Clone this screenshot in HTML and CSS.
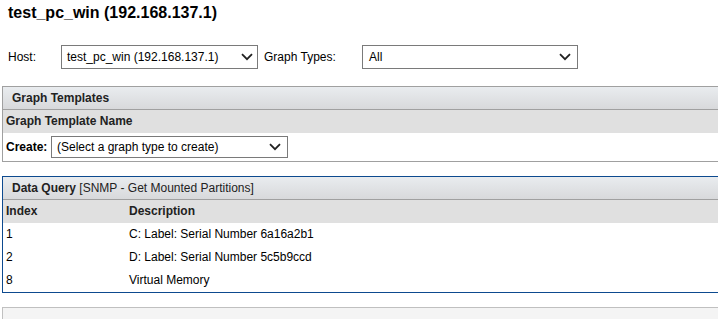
FILE: index.html
```html
<!DOCTYPE html>
<html lang="en">
<head>
    <meta charset="UTF-8">
    <title>New Graphs</title>
    <link rel="stylesheet" href="styles.css">
</head>
<body>
    <h1 class="title">test_pc_win (192.168.137.1)</h1>

    <div class="filter-row">
        <span class="label host-label">Host:</span>
        <div class="select host-select">
            <span>test_pc_win (192.168.137.1)</span>
            <svg class="chev" width="12" height="8" viewBox="0 0 12 8"><path d="M1 1.2 L6 6.2 L11 1.2" fill="none" stroke="#222" stroke-width="1.8"/></svg>
        </div>
        <span class="label types-label">Graph Types:</span>
        <div class="select types-select">
            <span>All</span>
            <svg class="chev" width="12" height="8" viewBox="0 0 12 8"><path d="M1 1.2 L6 6.2 L11 1.2" fill="none" stroke="#222" stroke-width="1.8"/></svg>
        </div>
    </div>

    <div class="panel">
        <div class="panel-head">Graph Templates</div>
        <div class="col-head">Graph Template Name</div>
        <div class="create-row">
            <span class="create-label">Create:</span>
            <div class="select create-select">
                <span>(Select a graph type to create)</span>
                <svg class="chev" width="12" height="8" viewBox="0 0 12 8"><path d="M1 1.2 L6 6.2 L11 1.2" fill="none" stroke="#222" stroke-width="1.8"/></svg>
            </div>
        </div>
    </div>

    <div class="panel panel-blue">
        <div class="panel-head"><b>Data Query</b> [SNMP - Get Mounted Partitions]</div>
        <div class="col-head grid-row">
            <span>Index</span>
            <span>Description</span>
        </div>
        <div class="grid-row data-row">
            <span>1</span>
            <span>C: Label: Serial Number 6a16a2b1</span>
        </div>
        <div class="grid-row data-row">
            <span>2</span>
            <span>D: Label: Serial Number 5c5b9ccd</span>
        </div>
        <div class="grid-row data-row">
            <span>8</span>
            <span>Virtual Memory</span>
        </div>
    </div>

    <div class="panel panel-next"></div>
</body>
</html>
```

FILE: styles.css
```css
body {
    margin: 0;
    font-family: "Liberation Sans", Arial, sans-serif;
    font-size: 12px;
    color: #000;
    background-color: #fff;
    overflow: hidden;
}
.title {
    margin: 0;
    padding: 4px 8px 0;
    font-size: 16px;
    line-height: 18px;
    font-weight: bold;
}
.filter-row {
    display: flex;
    align-items: center;
    margin-top: 23px;
    padding-left: 8px;
    height: 24px;
}
.label {
    display: inline-block;
}
.host-label {
    width: 53px;
}
.types-label {
    width: 98px;
    margin-left: 6px;
}
.select {
    box-sizing: border-box;
    display: flex;
    align-items: center;
    justify-content: space-between;
    height: 24px;
    padding: 0 6px 0 5px;
    border: 1px solid #7a7a7a;
    background-color: #fff;
    font-size: 12px;
    color: #000;
}
.host-select {
    width: 197px;
    padding-right: 4px;
}
.types-select {
    width: 216px;
    padding-left: 6px;
}
.create-select {
    width: 237px;
    height: 22px;
    padding-right: 6px;
}
.panel {
    box-sizing: border-box;
    width: calc(100% - 2px);
    margin-left: 2px;
    margin-top: 17px;
    border: 1px solid #a0a0a0;
    border-right: none;
}
.panel-head {
    box-sizing: border-box;
    height: 23px;
    line-height: 22px;
    padding-left: 9px;
    background: linear-gradient(#e9ecef, #d8d9db);
    border-bottom: 1px solid #a0a0a0;
    color: #222;
    font-weight: bold;
}
.col-head {
    height: 23px;
    line-height: 23px;
    padding-left: 3px;
    background-color: #e0e0e0;
    font-weight: bold;
    color: #222;
}
.create-row {
    display: flex;
    align-items: center;
    height: 28px;
    padding-left: 3px;
}
.create-label {
    width: 45px;
    font-weight: bold;
}
.panel-blue {
    margin-top: 14px;
    border-color: #0d4a8f;
}
.panel-blue .panel-head {
    font-weight: normal;
}
.panel-blue .panel-head b {
    font-weight: bold;
}
.grid-row {
    display: grid;
    grid-template-columns: 123px 1fr;
}
.data-row {
    height: 23px;
    line-height: 23px;
    padding-left: 3px;
}
.panel-next {
    margin-top: 14px;
    height: 12px;
    border-color: #c0c0c0;
    border-bottom: none;
    background-color: #f4f4f4;
}
```
